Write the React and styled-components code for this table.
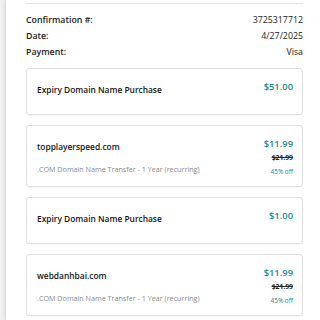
import React from 'react'
import styled, { createGlobalStyle } from 'styled-components'

const GlobalStyle = createGlobalStyle`
  html, body {
    margin: 0;
    padding: 0;
    background: #f3f3f3;
  }
  body {
    font-family: "Open Sans", "Noto Sans", "Liberation Sans", sans-serif;
    color: #1d1d1d;
    -webkit-font-smoothing: antialiased;
  }
`

const summary = [
  { label: 'Confirmation #:', value: '3725317712' },
  { label: 'Date:', value: '4/27/2025' },
  { label: 'Payment:', value: 'Visa' },
]

const items = [
  { title: 'Expiry Domain Name Purchase', price: '$51.00' },
  {
    title: 'topplayerspeed.com',
    detail: '.COM Domain Name Transfer - 1 Year (recurring)',
    price: '$11.99',
    was: '$21.99',
    off: '45% off',
  },
  { title: 'Expiry Domain Name Purchase', price: '$1.00' },
  {
    title: 'webdanhbai.com',
    detail: '.COM Domain Name Transfer - 1 Year (recurring)',
    price: '$11.99',
    was: '$21.99',
    off: '45% off',
  },
]

export default function App() {
  return (
    <>
      <GlobalStyle />
      <Shell>
        <Content>
          <Rule />
          <Summary>
            {summary.map(row => (
              <SummaryRow key={row.label}>
                <Label>{row.label}</Label>
                <Value>{row.value}</Value>
              </SummaryRow>
            ))}
          </Summary>
          <List>
            {items.map((item, i) => (
              <Card key={i}>
                <Info>
                  <Title>{item.title}</Title>
                  {item.detail && <Detail>{item.detail}</Detail>}
                </Info>
                <Prices>
                  <Price>{item.price}</Price>
                  {item.was && <Was>{item.was}</Was>}
                  {item.off && <Off>{item.off}</Off>}
                </Prices>
              </Card>
            ))}
          </List>
        </Content>
      </Shell>
    </>
  )
}

const Shell = styled.div`
  margin-left: 5px;
  min-height: 320px;
  background: #fff;
  border-left: 1px solid #dcdcdc;
  box-shadow: -2px 0 3px rgba(0, 0, 0, 0.06);
`

const Content = styled.div`
  padding: 3px 17px 0 20px;
`

const Rule = styled.div`
  border-top: 1px solid #e3e3e3;
`

const Summary = styled.div`
  padding-top: 8px;
`

const SummaryRow = styled.div`
  display: flex;
  justify-content: space-between;
  align-items: center;
  height: 16px;
  font-size: 8.8px;
`

const Label = styled.span`
  font-weight: 600;
  color: #1b1b1b;
`

const Value = styled.span`
  font-weight: 400;
  color: #1b1b1b;
`

const List = styled.div`
  display: flex;
  flex-direction: column;
  gap: 10px;
  margin-top: 8px;
`

const Card = styled.div`
  box-sizing: border-box;
  min-height: 47px;
  display: flex;
  justify-content: space-between;
  align-items: flex-start;
  padding: 12px 9px 10px 10px;
  border: 1px solid #dedede;
  border-radius: 3px;
  box-shadow: 0 1px 1px rgba(0, 0, 0, 0.03);
`

const Info = styled.div`
  display: flex;
  flex-direction: column;
  padding-top: 3px;
`

const Title = styled.div`
  font-size: 8.4px;
  line-height: 11px;
  font-weight: 600;
  color: #151515;
`

const Detail = styled.div`
  margin-top: 12px;
  font-size: 7.2px;
  line-height: 10px;
  color: #8a8a8a;
`

const Prices = styled.div`
  display: flex;
  flex-direction: column;
  align-items: flex-end;
`

const Price = styled.div`
  font-size: 9.4px;
  line-height: 11px;
  font-weight: 600;
  color: #16898b;
`

const Was = styled.div`
  margin-top: 4px;
  font-size: 6.8px;
  line-height: 10px;
  font-weight: 700;
  color: #222;
  text-decoration: line-through;
`

const Off = styled.div`
  margin-top: 4px;
  font-size: 6.4px;
  line-height: 9px;
  color: #16898b;
`
